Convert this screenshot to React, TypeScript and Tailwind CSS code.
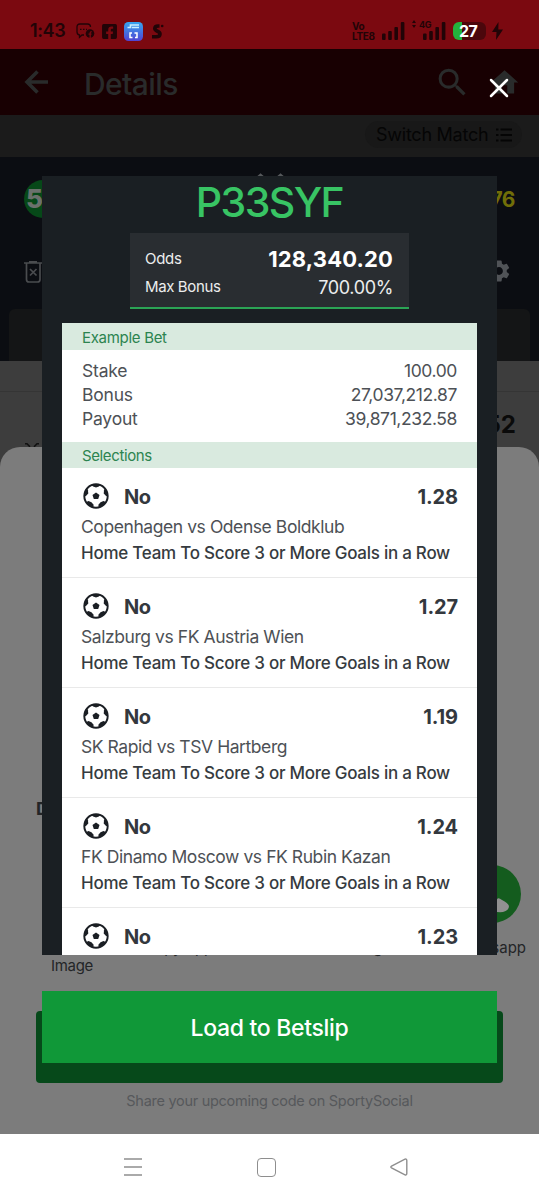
import React from "react";
import { FaFacebookSquare } from "react-icons/fa";
import { MdHome, MdSearch, MdSettings } from "react-icons/md";

interface Selection {
  id: number;
  pick: string;
  odds: string;
  match: string;
  market: string;
}

const MARKET = "Home Team To Score 3 or More Goals in a Row";

const selections: Selection[] = [
  { id: 1, pick: "No", odds: "1.28", match: "Copenhagen vs Odense Boldklub", market: MARKET },
  { id: 2, pick: "No", odds: "1.27", match: "Salzburg vs FK Austria Wien", market: MARKET },
  { id: 3, pick: "No", odds: "1.19", match: "SK Rapid vs TSV Hartberg", market: MARKET },
  { id: 4, pick: "No", odds: "1.24", match: "FK Dinamo Moscow vs FK Rubin Kazan", market: MARKET },
  { id: 5, pick: "No", odds: "1.23", match: "", market: "" },
];

const exampleBet = [
  { label: "Stake", value: "100.00" },
  { label: "Bonus", value: "27,037,212.87" },
  { label: "Payout", value: "39,871,232.58" },
];

function FootballIcon() {
  return (
    <svg width="26" height="26" viewBox="0 0 26 26" fill="none">
      <circle cx="13" cy="13" r="11.7" stroke="#1b1f24" strokeWidth="1.9" />
      <path d="M13 9.4l3.5 2.5-1.3 4.1h-4.4l-1.3-4.1z" fill="#1b1f24" />
      <g fill="#1b1f24">
        <path d="M8.3 1.8Q13 .4 17.7 1.8L15.9 3.6 13 4.5 10.1 3.6z" />
        <path d="M8.3 1.8Q13 .4 17.7 1.8L15.9 3.6 13 4.9 10.1 3.6z" transform="rotate(72 13 13)" />
        <path d="M8.3 1.8Q13 .4 17.7 1.8L16.2 4.6 13 5.2 9.8 4.6z" transform="rotate(144 13 13)" />
        <path d="M8.3 1.8Q13 .4 17.7 1.8L16.2 4.6 13 5.2 9.8 4.6z" transform="rotate(216 13 13)" />
        <path d="M8.3 1.8Q13 .4 17.7 1.8L15.9 3.6 13 4.9 10.1 3.6z" transform="rotate(288 13 13)" />
      </g>
    </svg>
  );
}

function SignalBars() {
  return (
    <svg width="23" height="19" viewBox="0 0 23 19" fill="#210407">
      <rect x="0" y="11.5" width="3.6" height="6.5" rx="1" />
      <rect x="6.2" y="9" width="3.6" height="9" rx="1" />
      <rect x="12.4" y="5" width="3.6" height="13" rx="1" />
      <rect x="18.8" y="0" width="3.6" height="18" rx="1" />
    </svg>
  );
}

function StatusBar() {
  return (
    <div className="flex h-[49px] items-center bg-[#7b0910] pt-[13px] pl-[30px] text-[#210407]">
      <span className="w-[46px] text-[18px] leading-none font-semibold tracking-[-0.4px]">1:43</span>
      <svg className="shrink-0" width="19" height="16" viewBox="0 0 19 16" fill="none" stroke="#210407" strokeWidth="1.3">
        <path d="M8 12H6l-2.5 2.3V12Q1 11.5 1 9V4q0-3 3-3h7.500q3 0 3 3" />
        <path d="M4 6.300h1.500M7 6.300h1.500M10 6.300h1" />
        <circle cx="14" cy="10.500" r="4.300" fill="#210407" stroke="none" />
        <path d="M14.200 15V9.800q0-1.200 1.500-1.200M12.500 11.200h3" stroke="#7b0910" />
      </svg>
      <FaFacebookSquare className="ml-[6px] shrink-0" size={17} />
      <svg className="ml-[6px] shrink-0" width="19" height="19" viewBox="0 0 19 19" fill="none">
        <defs>
          <linearGradient id="appTile" x1="0" y1="0" x2="0" y2="1">
            <stop offset="0" stopColor="#35a6f0" />
            <stop offset="1" stopColor="#5143d3" />
          </linearGradient>
        </defs>
        <rect width="19" height="19" rx="4.500" fill="url(#appTile)" />
        <path d="M3.500 5.500h3V3H15M8 5.500h7" stroke="#c9f0ff" strokeWidth="1.700" />
        <path d="M8 11H6v4.500h2.500M10.500 11h2.500v4.500h-2" stroke="#fff" strokeWidth="1.500" />
      </svg>
      <svg className="ml-[9px] shrink-0" width="12" height="15" viewBox="0 0 12 15" fill="none">
        <path d="M7.500 2H6.300Q2.800 2 2.800 4.600 2.800 6 5 7q3 1.200 3 3 0 2.800-4 2.800H0" stroke="#210407" strokeWidth="3.600" />
        <circle cx="10.200" cy="2" r="1.300" fill="#210407" />
      </svg>
      <div className="ml-[188px] flex w-[25px] flex-col text-[10px] leading-[10px] font-bold tracking-[-0.3px]">
        <span>Vo</span>
        <span>LTE8</span>
      </div>
      <div className="ml-[5px] shrink-0"><SignalBars /></div>
      <div className="relative ml-[18px] shrink-0">
        <SignalBars />
        <span className="absolute -top-[2px] -left-[11px] flex items-center gap-[3px] text-[9px] leading-none font-bold tracking-[-0.4px] whitespace-nowrap">
          <svg width="4" height="8" viewBox="0 0 4 8" fill="#210407">
            <path d="M2 0l2 3H0zM2 8L0 5h4z" />
          </svg>
          4G
        </span>
      </div>
      <div className="ml-[7px] flex h-[18px] w-[33px] shrink-0 items-center overflow-hidden rounded-[6px] bg-[#4b070c] bg-linear-to-r from-[#23b33c] from-28% to-[#4b070c] to-28% pl-[6px]">
        <span className="text-[16px] leading-none font-bold tracking-[-0.5px] text-white">27</span>
      </div>
      <svg className="ml-[6px] shrink-0" width="11" height="18" viewBox="0 0 11 18" fill="#210407">
        <path d="M6.500 0L0 10h4.500L4 18l7-10.500H6.300z" />
      </svg>
    </div>
  );
}

// the details page that sits behind the overlay
function DetailsPage() {
  return (
    <>
      <header className="flex h-[66px] items-center bg-[#180002] pl-[24px] text-[#292b2b]">
        <svg className="shrink-0" width="25" height="24" viewBox="0 0 25 24" fill="none" stroke="currentColor" strokeWidth="3.600">
          <path d="M24 12H3M13.500 1.500L3 12l10.500 10.500" />
        </svg>
        <h1 className="mt-[3px] ml-[35px] w-[93px] text-[30px] leading-none font-[450] tracking-[-0.6px]">Details</h1>
        <MdSearch className="ml-[257px] shrink-0" size={37} />
        <MdHome className="ml-[17px] shrink-0" size={33} />
      </header>

      <div className="flex h-[42px] items-center justify-end bg-[#1b1b1b] pr-[17px]">
        <div className="-mt-[3px] flex h-[27px] w-[157px] items-center rounded-full bg-[#181818] pl-[11px] text-[#050505]">
          <span className="text-[18px] leading-none tracking-[-0.25px] whitespace-nowrap">Switch Match</span>
          <svg className="ml-[8px] shrink-0" width="16" height="14" viewBox="0 0 16 14" stroke="currentColor" strokeWidth="2">
            <path d="M0 1.500h2.500M4.500 1.500H16M0 7h2.500M4.500 7H16M0 12.500h2.500M4.500 12.500H16" />
          </svg>
        </div>
      </div>

      <section className="flex h-[204px] flex-col bg-[#0b0d12] px-[9px] pt-[15px]">
        <svg className="ml-[247px] shrink-0" width="30" height="8" viewBox="0 0 30 8" fill="none" stroke="#55585b" strokeWidth="2">
          <path d="M0 6.500l4.500-4L9 6.500M20 6.500l4.500-4L29 6.500" />
        </svg>
        <div className="flex h-[38px] items-center justify-between pr-[15px] pl-[15px]">
          <div className="flex size-[38px] items-center justify-center rounded-full bg-[#064818] pr-[17px] text-[26px] leading-none font-extrabold text-[#6c716d]">
            5
          </div>
          <span className="text-[21px] leading-none font-bold tracking-[-0.5px] text-[#716e08]">76</span>
        </div>
        <div className="mt-[43px] flex justify-between pr-[18px] pl-[15px]">
          <svg width="20" height="23" viewBox="0 0 20 23" fill="none" stroke="#4a4c4f" strokeWidth="1.700">
            <path d="M0 2h18M5 .8h8M2.500 2v16.500q0 2.500 2.500 2.500h8.500q2.500 0 2.500-2.500V2M6 8l6.500 6.500M12.500 8L6 14.500" />
          </svg>
          <MdSettings className="-mt-[3px] text-[#505357]" size={26} />
        </div>
        <div className="mt-auto h-[52px] shrink-0 rounded-t-[6px] bg-[#141516]" />
      </section>

      <section className="flex h-[86px] flex-col bg-[#3d3d3d]">
        <div className="h-[31px] shrink-0 border-b border-[#353535]" />
        <div className="flex h-[66px] shrink-0 items-center justify-end pr-[23px] text-[24px] font-bold text-[#0a0a0a]">52</div>
      </section>

      <section className="-mt-[4px] flex h-[691px] flex-col bg-[#3d3d3d]">
        <svg className="ml-[25px] shrink-0" width="14" height="4" viewBox="0 0 14 4" fill="none" stroke="#111" strokeWidth="1.600">
          <path d="M0 .8h2l3 3M14 .8h-2l-3 3" />
        </svg>
        <div className="flex h-[687px] flex-col rounded-t-[20px] bg-[#7c7c7c] text-[#232527]">
          <div className="mt-[352px] pl-[36px] text-[18px] leading-[20px] font-bold">D</div>
          <div className="mt-[46px] flex justify-end pr-[18px]">
            <svg width="58" height="58" viewBox="0 0 58 58">
              <circle cx="29" cy="29" r="29" fill="#145c1e" />
              <path d="M30 37q2 0 4-2.500 1-2.500 5 .5 6 3 7 6 0 4.500-6 6-4 .5-10-.5z" fill="#919191" />
            </svg>
          </div>
          <div className="mt-[16px] flex h-[36px] pr-[13px] pl-[51px] text-[15px] leading-[18px] tracking-[-0.3px]">
            <span className="w-[50px]">Save Image</span>
            <span className="ml-[44px]">Copy App</span>
            <span className="ml-[132px] w-[64px]">Telegram</span>
            <span className="ml-auto tracking-normal">Whatsapp</span>
          </div>
          <div className="mx-[36px] mt-[36px] h-[72px] shrink-0 rounded-[4px] bg-[#06491a]" />
          <p className="mt-[8px] text-center text-[14.500px] leading-[20px] tracking-[-0.28px] text-[#56585b]">
            Share your upcoming code on SportySocial
          </p>
        </div>
      </section>
    </>
  );
}

function SelectionRow({ selection }: { selection: Selection }) {
  return (
    <li className="flex h-[110px] flex-col border-b border-[#e9e9e9] px-[19px] pt-[15px]">
      <div className="flex h-[27px] items-center text-[20px] font-bold text-[#33383e]">
        <div className="-mt-[2px] ml-[2px]"><FootballIcon /></div>
        <span className="ml-[15px] tracking-[-0.5px]">{selection.pick}</span>
        <span className="ml-auto tracking-[-0.1px]">{selection.odds}</span>
      </div>
      <span className="mt-[4px] text-[17.500px] leading-[26px] tracking-[-0.43px] text-[#4d5156]">{selection.match}</span>
      <span className="text-[17px] leading-[27px] font-medium tracking-[-0.26px] whitespace-nowrap text-[#363b40]">{selection.market}</span>
    </li>
  );
}

function BookingCodeModal() {
  return (
    <div className="absolute inset-x-0 top-[76px] flex flex-col px-[42px]">
      <button aria-label="Close" className="mr-[-14px] self-end p-[2px]">
        <svg width="20" height="20" viewBox="0 0 20 20" stroke="#fff" strokeWidth="2.500" strokeLinecap="round">
          <path d="M2 2l16 16M18 2L2 18" />
        </svg>
      </button>

      <div className="mt-[76px] flex h-[779px] flex-col overflow-hidden bg-[#1a1f23] px-[20px]">
        <h2 className="mt-[3px] text-center text-[41px] leading-[46px] font-[450] tracking-[-1.600px] text-[#38c464]">P33SYF</h2>
        <div className="mx-auto mt-[8px] flex h-[76px] w-[279px] shrink-0 flex-col border-b-2 border-[#2ba455] bg-[#292d31] px-[16px] pt-[12px] text-[15px] text-[#eceded]">
          <div className="flex h-[28px] items-center justify-between">
            <span className="-ml-px tracking-[-0.3px]">Odds</span>
            <span className="text-[22px] font-bold tracking-[0.15px] text-white">128,340.20</span>
          </div>
          <div className="flex h-[28px] items-center justify-between">
            <span className="-ml-px tracking-[-0.38px]">Max Bonus</span>
            <span className="text-[18px] tracking-[-0.35px]">700.00%</span>
          </div>
        </div>

        <div className="mt-[14px] shrink-0 bg-white">
          <h3 className="h-[27px] bg-[#d9eadf] pl-[20px] text-[15px] leading-[30px] tracking-[-0.3px] text-[#2c8450]">Example Bet</h3>
          <dl className="h-[92px] px-[20px] pt-[9px] text-[17.500px] leading-[24px] text-[#4d5156]">
            {exampleBet.map((row) => (
              <div key={row.label} className="flex justify-between">
                <dt className="tracking-[-0.2px]">{row.label}</dt>
                <dd className="tracking-[-0.4px]">{row.value}</dd>
              </div>
            ))}
          </dl>
          <h3 className="h-[26px] bg-[#d9eadf] pl-[20px] text-[15px] leading-[28px] tracking-[-0.38px] text-[#2c8450]">Selections</h3>
          <ul>
            {selections.map((selection) => (
              <SelectionRow key={selection.id} selection={selection} />
            ))}
          </ul>
        </div>
      </div>

      <button className="mt-[36px] h-[72px] bg-[#109838] pt-[2px] text-[23px] font-medium tracking-[-0.3px] text-white">
        Load to Betslip
      </button>
    </div>
  );
}

function NavigationBar() {
  return (
    <nav className="flex h-[66px] items-center bg-white pl-[124px] text-[#8e8e8e]">
      <svg width="18" height="18" viewBox="0 0 18 18" stroke="currentColor" strokeWidth="1.500">
        <path d="M0 1h18M0 9h18M0 17h18" />
      </svg>
      <div className="ml-[115px] size-[19px] rounded-[4px] border-[1.500px] border-[#8e8e8e]" />
      <svg className="ml-[114px]" width="18" height="18" viewBox="0 0 18 18" fill="none" stroke="currentColor" strokeWidth="1.400">
        <path d="M1.500 8.200L15 1.200q1.800-.6 1.800 1.300v13q0 1.900-1.800 1.300L1.500 9.800q-1.300-.8 0-1.600z" />
      </svg>
    </nav>
  );
}

export default function App() {
  return (
    <div className="relative h-[1200px] w-[539px] overflow-hidden bg-[#7c7c7c] font-['Inter',sans-serif]">
      <StatusBar />
      <DetailsPage />
      <NavigationBar />
      <BookingCodeModal />
    </div>
  );
}
